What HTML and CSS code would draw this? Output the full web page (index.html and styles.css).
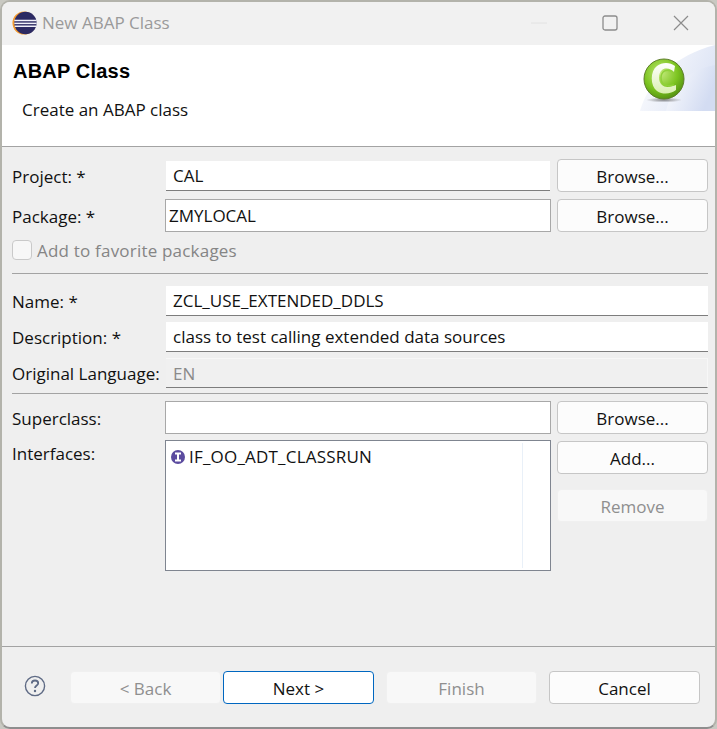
FILE: index.html
```html
<!DOCTYPE html>
<html lang="en">
<head>
  <meta charset="UTF-8" />
  <title>New ABAP Class</title>
  <link rel="stylesheet" href="styles.css">
</head>
<body>
  <div class="window">

    <div class="titlebar">
      <svg class="app-icon" width="26" height="26" viewBox="0 0 28 28">
        <circle cx="13" cy="14" r="12.5" fill="#f39a2e"/>
        <circle cx="14.5" cy="14" r="12" fill="#2c2a63"/>
        <rect x="2.5" y="10.5" width="24" height="1.6" fill="#f2f2fa"/>
        <rect x="2.5" y="13.6" width="24" height="1.6" fill="#f2f2fa"/>
        <rect x="3" y="16.7" width="23" height="1.6" fill="#f2f2fa"/>
      </svg>
      <span class="window-title">New ABAP Class</span>
      <div class="window-controls">
        <svg width="16" height="16" viewBox="0 0 16 16"><path d="M0 8H16" stroke="#e2e2e2"/></svg>
        <svg width="16" height="16" viewBox="0 0 16 16"><rect x="1" y="1" width="14" height="14" rx="2" fill="none" stroke="#8c8c8c" stroke-width="1.3"/></svg>
        <svg width="16" height="16" viewBox="0 0 16 16"><path d="M1 1L15 15M15 1L1 15" stroke="#8c8c8c" stroke-width="1.2"/></svg>
      </div>
    </div>

    <div class="banner">
      <h1>ABAP Class</h1>
      <p>Create an ABAP class</p>
      <svg class="banner-art" width="75" height="66" viewBox="0 0 75 66">
        <defs>
          <linearGradient id="fade" x1="0" y1="0" x2="1" y2="0.4">
            <stop offset="0" stop-color="#ffffff"/>
            <stop offset="1" stop-color="#d3dcf2"/>
          </linearGradient>
          <radialGradient id="ball" cx="0.42" cy="0.35" r="0.7">
            <stop offset="0" stop-color="#c4ea7c"/>
            <stop offset="0.6" stop-color="#7cc420"/>
            <stop offset="1" stop-color="#4f8c10"/>
          </radialGradient>
          <radialGradient id="shade" cx="0.5" cy="0.5" r="0.5">
            <stop offset="0" stop-color="#555" stop-opacity="0.7"/>
            <stop offset="1" stop-color="#555" stop-opacity="0"/>
          </radialGradient>
          <linearGradient id="letter" x1="0" y1="0" x2="0" y2="1">
            <stop offset="0" stop-color="#ffffff"/>
            <stop offset="1" stop-color="#d9f0b0"/>
          </linearGradient>
        </defs>
        <path d="M0 66C8 36 36 10 75 0V66Z" fill="url(#fade)" opacity="0.75"/>
        <path d="M26 66C32 40 50 24 75 20V66Z" fill="url(#fade)"/>
        <ellipse cx="24" cy="55" rx="18" ry="2.5" fill="url(#shade)"/>
        <circle cx="24" cy="34" r="20" fill="url(#ball)" stroke="#5d7d2a" stroke-width="1"/>
        <path d="M35 21C30 17 22 17 17 21C10 26 10 41 17 46C23 50 31 49 36 45V40C31 42 25 43 22 40C18 37 18 28 22 25C26 22 31 24 34 27Z" fill="url(#letter)"/>
        <path d="M33 27C27 23 21 26 21 33C21 40 27 42 34 40" fill="none" stroke="#8fd13a" stroke-width="1.5"/>
      </svg>
    </div>

    <div class="form">
      <div class="row">
        <label>Project: *</label>
        <div class="field flat">CAL</div>
        <button class="btn">Browse...</button>
      </div>
      <div class="row row-package">
        <label>Package: *</label>
        <div class="field boxed">ZMYLOCAL</div>
        <button class="btn">Browse...</button>
      </div>
      <div class="check-row">
        <span class="checkbox"></span>
        <span class="muted">Add to favorite packages</span>
      </div>
      <hr class="sep sep-package">

      <div class="row-wide row-name">
        <label>Name: *</label>
        <div class="field flat">ZCL_USE_EXTENDED_DDLS</div>
      </div>
      <div class="row-wide row-desc">
        <label>Description: *</label>
        <div class="field flat">class to test calling extended data sources</div>
      </div>
      <div class="row-wide row-lang">
        <label>Original Language:</label>
        <div class="field flat disabled">EN</div>
      </div>
      <hr class="sep sep-lang">

      <div class="row row-super">
        <label>Superclass:</label>
        <div class="field boxed"></div>
        <button class="btn">Browse...</button>
      </div>
      <div class="row row-interfaces">
        <label>Interfaces:</label>
        <div class="list">
          <div class="list-item">
            <svg width="16" height="16" viewBox="0 0 16 16">
              <circle cx="8" cy="8" r="7" fill="#5b4b9f"/>
              <path d="M5 4.500H11M5 11.500H11M8 4.500V11.500" stroke="#fff" stroke-width="2"/>
            </svg>
            <span>IF_OO_ADT_CLASSRUN</span>
          </div>
          <div class="list-rule"></div>
        </div>
        <div class="side-buttons">
          <button class="btn">Add...</button>
          <button class="btn" disabled>Remove</button>
        </div>
      </div>
    </div>

    <div class="footer">
      <svg class="help" width="22" height="22" viewBox="0 0 22 22">
        <circle cx="11" cy="11" r="9.600" fill="none" stroke="#5f6b85" stroke-width="1.400"/>
        <path d="M7.800 8.500C7.800 6.500 9.300 5.500 11 5.500C12.800 5.500 14.200 6.600 14.200 8.300C14.200 10.500 11 10.600 11 13" fill="none" stroke="#5f6b85" stroke-width="1.800"/>
        <circle cx="11" cy="16" r="1.200" fill="#5f6b85"/>
      </svg>
      <button class="btn" disabled>&lt; Back</button>
      <button class="btn default">Next &gt;</button>
      <button class="btn finish" disabled>Finish</button>
      <button class="btn cancel">Cancel</button>
    </div>

  </div>
</body>
</html>
```

FILE: styles.css
```css
* {
  box-sizing: border-box;
}

body {
  margin: 0;
  background: #c9c9c2;
  font-family: 'Open Sans', 'Noto Sans', sans-serif;
  font-size: 17px;
  color: #111;
}

.window {
  width: 717px;
  height: 729px;
  border: 2px solid #b3b3ab;
  border-bottom-color: #8e8e8e;
  border-radius: 10px;
  background: #efefef;
  display: flex;
  flex-direction: column;
  overflow: hidden;
}

/* Title bar */
.titlebar {
  height: 43px;
  flex-shrink: 0;
  display: flex;
  align-items: center;
  padding: 0 0 2px 10px;
  background: #f1f1f1;
}
.app-icon {
  margin-right: 4px;
}
.window-title {
  color: #9a9a9a;
}
.window-controls {
  margin-left: auto;
  margin-right: 26px;
  display: flex;
  gap: 55px;
}

/* Banner */
.banner {
  height: 102px;
  flex-shrink: 0;
  position: relative;
  background: #fff;
  border-bottom: 1px solid #a3a3a3;
  padding: 12px 11px;
}
.banner h1 {
  margin: 0;
  font-family: 'Liberation Sans', sans-serif;
  font-size: 20px;
  line-height: 28px;
  font-weight: bold;
  letter-spacing: 0.2px;
  color: #000;
}
.banner p {
  margin: 13px 0 0 9px;
  line-height: 24px;
}
.banner-art {
  position: absolute;
  right: 0;
  top: 0;
}

/* Form */
.form {
  flex: 1;
  padding: 12px 7px 0 10px;
}
label {
  line-height: 35px;
}
.row {
  display: grid;
  grid-template-columns: 147px 386px 151px;
  grid-template-rows: 33px;
  column-gap: 6px;
}
.row-package {
  margin-top: 7px;
}
.row-super {
  margin-top: 7px;
}
.row-interfaces {
  margin-top: 6px;
  grid-template-rows: 131px;
}
.row-interfaces label {
  line-height: 27px;
}
.row-wide {
  display: grid;
  grid-template-columns: 154px 1fr;
  grid-template-rows: 30px;
}
.row-name {
  margin-top: 12px;
}
.row-desc,
.row-lang {
  margin-top: 6px;
}
.row-wide label {
  line-height: 32px;
}

.field {
  background: #fff;
  line-height: 30px;
}
.flat {
  border-bottom: 1px solid #7d7d7d;
  padding-left: 7px;
}
.row .flat {
  margin: 2px 1px 1px;
}
.boxed {
  border: 1.5px solid #a8a8a8;
  padding-left: 3px;
  line-height: 32px;
}
.disabled {
  background: #f0f0f0;
  color: #8a8a8a;
  border-top: 1px solid #f7f7f7;
  border-right: 1px solid #f7f7f7;
}

.check-row {
  display: flex;
  align-items: center;
  gap: 5px;
  height: 20px;
  margin-top: 8px;
}
.checkbox {
  width: 20px;
  height: 20px;
  background: #f7f7f7;
  border: 1px solid #c9c9c9;
  border-radius: 4px;
}
.muted {
  color: #858585;
  letter-spacing: 0.2px;
}

.sep {
  margin: 0;
  height: 1px;
  border: 0;
  background: #a3a3a3;
}
.sep-package {
  margin-top: 13px;
}
.sep-lang {
  margin-top: 5px;
}

.list {
  position: relative;
  background: #fff;
  border: 1.5px solid #7f8590;
  padding: 4px;
}
.list-item {
  display: flex;
  align-items: center;
  gap: 3px;
  line-height: 24px;
  letter-spacing: 0.2px;
}
.list-rule {
  position: absolute;
  top: 2px;
  bottom: 2px;
  right: 27px;
  width: 1px;
  background: #e9f0f8;
}
.side-buttons {
  display: flex;
  flex-direction: column;
  gap: 15px;
  padding-top: 1px;
}

/* Buttons */
.btn {
  height: 33px;
  padding: 2px 0 0;
  font: inherit;
  color: #111;
  background: #fcfcfc;
  border: 1px solid #c6c6c6;
  border-radius: 4px;
}
.btn:disabled {
  background: #f8f8f8;
  color: #8f8f8f;
  border-color: #f0f0f0;
}

/* Footer */
.footer {
  height: 81px;
  flex-shrink: 0;
  display: flex;
  align-items: flex-start;
  border-top: 1px solid #a3a3a3;
  padding: 24px 0 0 22px;
}
.footer .btn {
  width: 151px;
}
.help {
  margin: 4px 24px 0 0;
}
.default {
  margin-left: 2px;
  background: #fff;
  border-color: #0067c0;
}
.finish,
.cancel {
  margin-left: 12px;
}
```
